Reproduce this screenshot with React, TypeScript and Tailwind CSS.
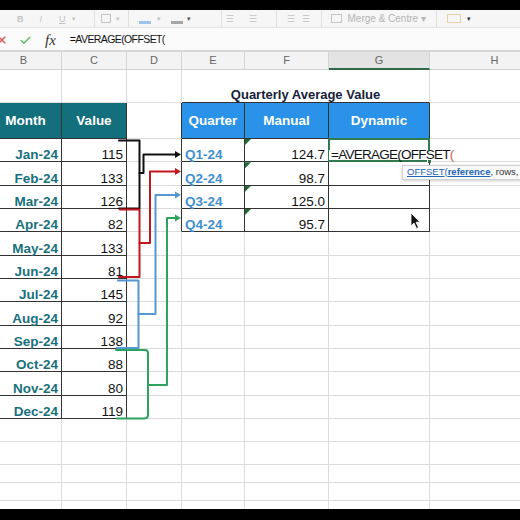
import type { ReactNode } from 'react'
import { Check, X } from 'lucide-react'

const months: [string, number][] = [
  ['Jan-24', 115],
  ['Feb-24', 133],
  ['Mar-24', 126],
  ['Apr-24', 82],
  ['May-24', 133],
  ['Jun-24', 81],
  ['Jul-24', 145],
  ['Aug-24', 92],
  ['Sep-24', 138],
  ['Oct-24', 88],
  ['Nov-24', 80],
  ['Dec-24', 119],
]

const quarters: [string, string][] = [
  ['Q1-24', '124.7'],
  ['Q2-24', '98.7'],
  ['Q3-24', '125.0'],
  ['Q4-24', '95.7'],
]

// column widths (B is partly cut off on the left)
const CB = 'w-[76px]'
const CC = 'w-[65px]'
const CD = 'w-[55px]'
const CE = 'w-[63px]'
const CF = 'w-[84px]'
const CG = 'w-[101px]'
const CH = 'w-[130px]'

const LIGHT = 'border-r-[#dcdcdc] border-b-[#dcdcdc]'
const DARK = 'border-r-[#333] border-b-[#333]'
const DARK_R = 'border-r-[#333] border-b-[#dcdcdc]'

function Cell({
  w,
  border = LIGHT,
  className = '',
  children,
}: {
  w: string
  border?: string
  className?: string
  children?: ReactNode
}) {
  return <div className={`${w} shrink-0 border-r border-b ${border} ${className}`}>{children}</div>
}

function Row({ h, children }: { h: string; children: ReactNode }) {
  return <div className={`flex shrink-0 ${h}`}>{children}</div>
}

function EmptyRow({ h }: { h: string }) {
  return (
    <Row h={h}>
      <Cell w={CB} />
      <Cell w={CC} />
      <Cell w={CD} />
      <Cell w={CE} />
      <Cell w={CF} />
      <Cell w={CG} />
      <Cell w={CH} />
    </Row>
  )
}

function Triangle() {
  return <div className="absolute left-0 top-0 h-[6px] w-[6px] bg-[#1e6b36] [clip-path:polygon(0_0,100%_0,0_100%)]" />
}

function Toolbar() {
  return (
    <div className="flex h-[18px] shrink-0 items-center overflow-hidden border-b border-b-[#e3e3e3] bg-[#f6f6f6] text-[9px] leading-[10px] text-[#c2c2c2]">
      <span className="ml-[17px] font-bold">B</span>
      <span className="ml-[16px] italic">I</span>
      <span className="ml-[17px] underline">U</span>
      <span className="ml-[6px] text-[7px]">▾</span>
      <div className="ml-[18px] h-[18px] w-px bg-[#e0e0e0]" />
      <div className="ml-[6px] h-[9px] w-[10px] border border-[#c4c4c4]" />
      <span className="ml-[5px] text-[7px]">▾</span>
      <div className="ml-[8px] h-[18px] w-px bg-[#e0e0e0]" />
      <div className="ml-[10px] mt-[8px] h-[3px] w-[12px] bg-[#9cc3ea]" />
      <span className="ml-[6px] text-[7px]">▾</span>
      <div className="ml-[10px] mt-[8px] h-[3px] w-[12px] bg-[#a5a5a5]" />
      <span className="ml-[4px] text-[7px] text-[#555]">▾</span>
      <div className="ml-[30px] h-[18px] w-px bg-[#e0e0e0]" />
      <span className="ml-[4px] tracking-[-1px]">☰</span>
      <span className="ml-[16px] tracking-[-1px]">☰</span>
      <div className="ml-[20px] h-[18px] w-px bg-[#e0e0e0]" />
      <span className="ml-[10px] tracking-[-1px]">☰</span>
      <span className="ml-[8px] tracking-[-1px]">☰</span>
      <div className="ml-[12px] h-[18px] w-px bg-[#e0e0e0]" />
      <div className="ml-[9px] h-[9px] w-[11px] border border-[#c4c4c4]" />
      <span className="ml-[6px] whitespace-nowrap text-[10px] text-[#b4b4b4]">Merge &amp; Centre ▾</span>
      <div className="ml-[10px] h-[18px] w-px bg-[#e0e0e0]" />
      <div className="ml-[10px] h-[9px] w-[14px] border border-[#eccfa8]" />
      <span className="ml-[6px] text-[7px] text-[#333]">▾</span>
    </div>
  )
}

function FormulaBar() {
  return (
    <div className="flex h-[22px] shrink-0 items-center bg-[#fbfbfb] pt-[2px] text-[10.5px] text-[#111]">
      <X className="-ml-[4px] h-[12px] w-[12px] text-[#d9534f]" strokeWidth={2.5} />
      <Check className="ml-[11px] h-[13px] w-[13px] text-[#5cb85c]" strokeWidth={2.5} />
      <span className="ml-[13px] font-['Liberation_Serif',serif] text-[15px] italic text-[#333]">fx</span>
      <span className="ml-[14px] tracking-[-0.6px]">=AVERAGE(OFFSET(</span>
    </div>
  )
}

function ColumnHeader() {
  const cols: [string, string][] = [
    ['B', CB],
    ['C', CC],
    ['D', CD],
    ['E', CE],
    ['F', CF],
    ['G', CG],
    ['H', CH],
  ]
  return (
    <div className="-ml-[14px] flex h-[20px] shrink-0 border-t-2 border-t-[#d6d6d6] bg-[#f3f3f3] text-[11px] text-[#666]">
      {cols.map(([c, w]) => (
        <div
          key={c}
          className={`${w} flex shrink-0 items-center justify-center border-r border-r-[#d4d4d4] ${
            c === 'G' ? 'border-b-2 border-b-[#2d6b4a] bg-[#e3e3e3]' : 'border-b border-b-[#cfcfcf]'
          }`}
        >
          {c}
        </div>
      ))}
    </div>
  )
}

function Connectors() {
  const arrow = (y: number, color: string) => (
    <polygon points={`181,${y} 175,${y - 3.5} 175,${y + 3.5}`} fill={color} />
  )
  return (
    <svg className="pointer-events-none absolute left-0 top-0" width="520" height="520" fill="none">
      <g strokeWidth="2" strokeLinejoin="round" strokeLinecap="round">
        <path d="M119 140.5 H139.5 V208.5 H119" stroke="#111" />
        <path d="M139.5 173 H143.5 V154.5 H176" stroke="#111" />
        <path d="M120 209.5 H139.5 V277 H119" stroke="#c1171d" />
        <path d="M139.5 243 H150 V171.5 H176" stroke="#c1171d" />
        <path d="M118 280.5 H138.5 V348 H117" stroke="#5597d2" />
        <path d="M138.5 314 H155.5 V195 H176" stroke="#5597d2" />
        <path d="M116 350 H145 Q148 350 148 353 V415 Q148 418.5 144 418.5 H117" stroke="#2ea35d" />
        <path d="M148 385 H167 V218 H176" stroke="#2ea35d" />
      </g>
      {arrow(154.5, '#111')}
      {arrow(171.5, '#c1171d')}
      {arrow(195, '#5597d2')}
      {arrow(218, '#2ea35d')}
      {/* mouse pointer */}
      <path
        d="M411 213 L411 226 L414 223 L416.5 228.5 L418.5 227.6 L416 222.2 L420 222.2 Z"
        fill="#111"
        stroke="#fff"
        strokeWidth="0.8"
      />
    </svg>
  )
}

export default function App() {
  return (
    <div className="relative flex h-[520px] w-[520px] flex-col overflow-hidden bg-white font-['Liberation_Sans',Arial,sans-serif]">
      <div className="h-[10px] shrink-0 bg-black" />
      <Toolbar />
      <FormulaBar />
      <ColumnHeader />

      <div className="-ml-[14px] flex flex-1 flex-col overflow-hidden text-[13.5px] leading-[10px] text-[#111]">
        {/* title row */}
        <Row h="h-[33px]">
          <Cell w={CB} />
          <Cell w={CC} />
          <Cell w={CD} />
          <Cell
            w="w-[248px]"
            border="border-r-[#dcdcdc] border-b-[#333]"
            className="flex items-end justify-center pb-[2px] text-[13px] font-bold text-[#16213a]"
          >
            Quarterly Average Value
          </Cell>
          <Cell w={CH} />
        </Row>

        {/* header row */}
        <Row h="h-[36px]">
          <Cell w={CB} border={DARK} className="flex items-center justify-center bg-[#136f7b] pl-[4px] font-bold text-white">
            Month
          </Cell>
          <Cell w={CC} border={DARK} className="flex items-center justify-center bg-[#136f7b] font-bold text-white">
            Value
          </Cell>
          <Cell w={CD} border={DARK_R} />
          <Cell w={CE} border={DARK} className="flex items-center justify-center bg-[#2a92e8] font-bold text-white">
            Quarter
          </Cell>
          <Cell w={CF} border={DARK} className="flex items-center justify-center bg-[#2a92e8] font-bold text-white">
            Manual
          </Cell>
          <Cell w={CG} border={DARK} className="flex items-center justify-center bg-[#2a92e8] font-bold text-white">
            Dynamic
          </Cell>
          <Cell w={CH} />
        </Row>

        {/* data rows */}
        {months.map(([m, v], i) => {
          const q = quarters[i]
          return (
            <Row key={m} h="h-[23.33px]">
              <Cell w={CB} border={DARK} className="flex items-end justify-end pb-[1px] pr-[3px] font-bold text-[#17707b]">
                {m}
              </Cell>
              <Cell w={CC} border={DARK} className="flex items-end justify-end pb-[1px] pr-[3px]">
                {v}
              </Cell>
              <Cell w={CD} border={q ? DARK_R : LIGHT} />
              {q ? (
                <>
                  <Cell w={CE} border={DARK} className="flex items-end pb-[1px] pl-[3px] font-bold text-[#3f8fd0]">
                    {q[0]}
                  </Cell>
                  <Cell w={CF} border={DARK} className="relative flex items-end justify-end pb-[1px] pr-[3px]">
                    <Triangle />
                    {q[1]}
                  </Cell>
                  <Cell w={CG} border={DARK} className="relative z-10 flex items-end pb-[1px]">
                    {i === 0 && (
                      <>
                        <div className="absolute -left-[1px] -top-[1px] h-[calc(100%+2px)] w-[calc(100%+2px)] border-2 border-[#2f7a4f]" />
                        <div className="absolute -bottom-[3px] -right-[3px] h-[5px] w-[5px] border border-white bg-[#2f7a4f]" />
                        <span className="relative whitespace-nowrap bg-white pl-[2px] pr-[2px] tracking-[-0.75px]">
                          =AVERAGE(OFFSET<span className="text-[#c9655c]">(</span>
                        </span>
                      </>
                    )}
                  </Cell>
                </>
              ) : (
                <>
                  <Cell w={CE} />
                  <Cell w={CF} />
                  <Cell w={CG} />
                </>
              )}
              <Cell w={CH} />
            </Row>
          )
        })}

        {/* empty rows below */}
        <EmptyRow h="h-[23px]" />
        <EmptyRow h="h-[23px]" />
        <EmptyRow h="h-[18px]" />
        <EmptyRow h="h-[18px]" />
        <EmptyRow h="h-[18px]" />
      </div>

      <div className="h-[11px] shrink-0 bg-black" />

      {/* function tooltip */}
      <div className="absolute left-[402px] top-[165px] z-20 flex h-[15px] items-center whitespace-nowrap border border-[#d0d0d0] bg-[#f9f9f9] pl-[4px] pr-[8px] text-[9.5px] text-[#333] shadow-[0_1px_3px_rgba(0,0,0,0.2)]">
        <span className="text-[#1f66b5] underline">OFFSET</span>
        <span className="text-[#1f66b5]">(</span>
        <span className="font-bold text-[#1f66b5] underline">reference</span>
        <span>, rows,</span>
      </div>

      <Connectors />
    </div>
  )
}
